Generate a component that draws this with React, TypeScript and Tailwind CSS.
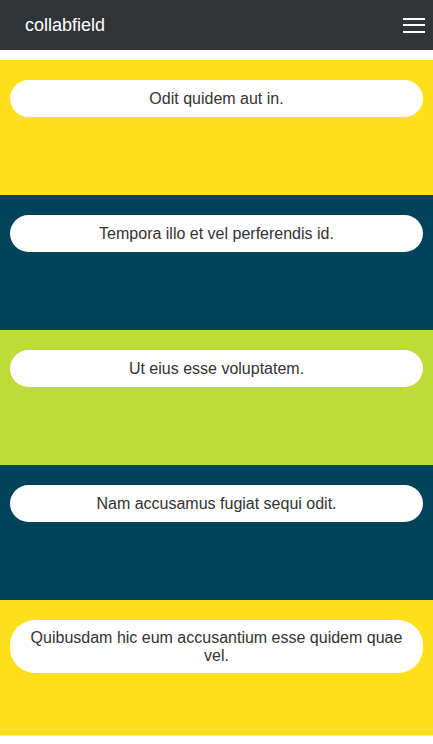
import React from 'react';

const posts = [
  { title: 'Odit quidem aut in.', bg: 'bg-[#ffe01b]' },
  { title: 'Tempora illo et vel perferendis id.', bg: 'bg-[#00435a]' },
  { title: 'Ut eius esse voluptatem.', bg: 'bg-[#bedb39]' },
  { title: 'Nam accusamus fugiat sequi odit.', bg: 'bg-[#00435a]' },
  { title: 'Quibusdam hic eum accusantium esse quidem quae vel.', bg: 'bg-[#ffe01b]' },
];

export default function App() {
  return (
    <div className="min-h-screen bg-white font-['Liberation_Sans',Arial,sans-serif]">
      <nav className="h-[50px] bg-[#313437] flex items-center justify-between pl-[25px] pr-[8px]">
        <span className="text-white text-[18px] leading-none">collabfield</span>
        <button className="w-[22px] flex flex-col gap-[4.5px] mr-[0px]">
          <span className="block h-[2px] bg-white" />
          <span className="block h-[2px] bg-white" />
          <span className="block h-[2px] bg-white" />
        </button>
      </nav>

      <main className="mt-[10px]">
        {posts.map((post, i) => (
          <section key={i} className={`${post.bg} h-[135px] px-[10px] pt-[20px]`}>
            <div className="bg-white rounded-[25px] min-h-[37px] py-[8.5px] px-[20px] flex items-center justify-center text-center text-[16px] leading-[18px] text-[#333]">
              {post.title}
            </div>
          </section>
        ))}
        <div className="h-px bg-[#ebe7d3]" />
      </main>
    </div>
  );
}
